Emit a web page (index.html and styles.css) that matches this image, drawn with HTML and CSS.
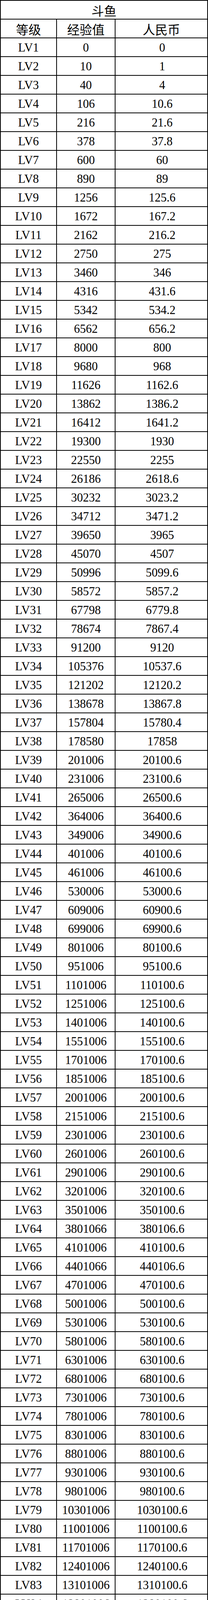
FILE: index.html
```html
<!DOCTYPE html>
<html lang="zh-CN">
<head>
<meta charset="utf-8">
<meta name="viewport" content="width=533, initial-scale=1">
<title>斗鱼 等级</title>
<link rel="stylesheet" href="styles.css">
</head>
<body>
<div class="sheet">
<div class="cell title">斗鱼</div>
<div class="cell head">等级</div><div class="cell head">经验值</div><div class="cell head">人民币</div>
<div class="cell lv">LV1</div><div class="cell xp">0</div><div class="cell rmb">0</div>
<div class="cell lv">LV2</div><div class="cell xp">10</div><div class="cell rmb">1</div>
<div class="cell lv">LV3</div><div class="cell xp">40</div><div class="cell rmb">4</div>
<div class="cell lv">LV4</div><div class="cell xp">106</div><div class="cell rmb">10.6</div>
<div class="cell lv">LV5</div><div class="cell xp">216</div><div class="cell rmb">21.6</div>
<div class="cell lv">LV6</div><div class="cell xp">378</div><div class="cell rmb">37.8</div>
<div class="cell lv">LV7</div><div class="cell xp">600</div><div class="cell rmb">60</div>
<div class="cell lv">LV8</div><div class="cell xp">890</div><div class="cell rmb">89</div>
<div class="cell lv">LV9</div><div class="cell xp">1256</div><div class="cell rmb">125.6</div>
<div class="cell lv">LV10</div><div class="cell xp">1672</div><div class="cell rmb">167.2</div>
<div class="cell lv">LV11</div><div class="cell xp">2162</div><div class="cell rmb">216.2</div>
<div class="cell lv">LV12</div><div class="cell xp">2750</div><div class="cell rmb">275</div>
<div class="cell lv">LV13</div><div class="cell xp">3460</div><div class="cell rmb">346</div>
<div class="cell lv">LV14</div><div class="cell xp">4316</div><div class="cell rmb">431.6</div>
<div class="cell lv">LV15</div><div class="cell xp">5342</div><div class="cell rmb">534.2</div>
<div class="cell lv">LV16</div><div class="cell xp">6562</div><div class="cell rmb">656.2</div>
<div class="cell lv">LV17</div><div class="cell xp">8000</div><div class="cell rmb">800</div>
<div class="cell lv">LV18</div><div class="cell xp">9680</div><div class="cell rmb">968</div>
<div class="cell lv">LV19</div><div class="cell xp">11626</div><div class="cell rmb">1162.6</div>
<div class="cell lv">LV20</div><div class="cell xp">13862</div><div class="cell rmb">1386.2</div>
<div class="cell lv">LV21</div><div class="cell xp">16412</div><div class="cell rmb">1641.2</div>
<div class="cell lv">LV22</div><div class="cell xp">19300</div><div class="cell rmb">1930</div>
<div class="cell lv">LV23</div><div class="cell xp">22550</div><div class="cell rmb">2255</div>
<div class="cell lv">LV24</div><div class="cell xp">26186</div><div class="cell rmb">2618.6</div>
<div class="cell lv">LV25</div><div class="cell xp">30232</div><div class="cell rmb">3023.2</div>
<div class="cell lv">LV26</div><div class="cell xp">34712</div><div class="cell rmb">3471.2</div>
<div class="cell lv">LV27</div><div class="cell xp">39650</div><div class="cell rmb">3965</div>
<div class="cell lv">LV28</div><div class="cell xp">45070</div><div class="cell rmb">4507</div>
<div class="cell lv">LV29</div><div class="cell xp">50996</div><div class="cell rmb">5099.6</div>
<div class="cell lv">LV30</div><div class="cell xp">58572</div><div class="cell rmb">5857.2</div>
<div class="cell lv">LV31</div><div class="cell xp">67798</div><div class="cell rmb">6779.8</div>
<div class="cell lv">LV32</div><div class="cell xp">78674</div><div class="cell rmb">7867.4</div>
<div class="cell lv">LV33</div><div class="cell xp">91200</div><div class="cell rmb">9120</div>
<div class="cell lv">LV34</div><div class="cell xp">105376</div><div class="cell rmb">10537.6</div>
<div class="cell lv">LV35</div><div class="cell xp">121202</div><div class="cell rmb">12120.2</div>
<div class="cell lv">LV36</div><div class="cell xp">138678</div><div class="cell rmb">13867.8</div>
<div class="cell lv">LV37</div><div class="cell xp">157804</div><div class="cell rmb">15780.4</div>
<div class="cell lv">LV38</div><div class="cell xp">178580</div><div class="cell rmb">17858</div>
<div class="cell lv">LV39</div><div class="cell xp">201006</div><div class="cell rmb">20100.6</div>
<div class="cell lv">LV40</div><div class="cell xp">231006</div><div class="cell rmb">23100.6</div>
<div class="cell lv">LV41</div><div class="cell xp">265006</div><div class="cell rmb">26500.6</div>
<div class="cell lv">LV42</div><div class="cell xp">364006</div><div class="cell rmb">36400.6</div>
<div class="cell lv">LV43</div><div class="cell xp">349006</div><div class="cell rmb">34900.6</div>
<div class="cell lv">LV44</div><div class="cell xp">401006</div><div class="cell rmb">40100.6</div>
<div class="cell lv">LV45</div><div class="cell xp">461006</div><div class="cell rmb">46100.6</div>
<div class="cell lv">LV46</div><div class="cell xp">530006</div><div class="cell rmb">53000.6</div>
<div class="cell lv">LV47</div><div class="cell xp">609006</div><div class="cell rmb">60900.6</div>
<div class="cell lv">LV48</div><div class="cell xp">699006</div><div class="cell rmb">69900.6</div>
<div class="cell lv">LV49</div><div class="cell xp">801006</div><div class="cell rmb">80100.6</div>
<div class="cell lv">LV50</div><div class="cell xp">951006</div><div class="cell rmb">95100.6</div>
<div class="cell lv">LV51</div><div class="cell xp">1101006</div><div class="cell rmb">110100.6</div>
<div class="cell lv">LV52</div><div class="cell xp">1251006</div><div class="cell rmb">125100.6</div>
<div class="cell lv">LV53</div><div class="cell xp">1401006</div><div class="cell rmb">140100.6</div>
<div class="cell lv">LV54</div><div class="cell xp">1551006</div><div class="cell rmb">155100.6</div>
<div class="cell lv">LV55</div><div class="cell xp">1701006</div><div class="cell rmb">170100.6</div>
<div class="cell lv">LV56</div><div class="cell xp">1851006</div><div class="cell rmb">185100.6</div>
<div class="cell lv">LV57</div><div class="cell xp">2001006</div><div class="cell rmb">200100.6</div>
<div class="cell lv">LV58</div><div class="cell xp">2151006</div><div class="cell rmb">215100.6</div>
<div class="cell lv">LV59</div><div class="cell xp">2301006</div><div class="cell rmb">230100.6</div>
<div class="cell lv">LV60</div><div class="cell xp">2601006</div><div class="cell rmb">260100.6</div>
<div class="cell lv">LV61</div><div class="cell xp">2901006</div><div class="cell rmb">290100.6</div>
<div class="cell lv">LV62</div><div class="cell xp">3201006</div><div class="cell rmb">320100.6</div>
<div class="cell lv">LV63</div><div class="cell xp">3501006</div><div class="cell rmb">350100.6</div>
<div class="cell lv">LV64</div><div class="cell xp">3801066</div><div class="cell rmb">380106.6</div>
<div class="cell lv">LV65</div><div class="cell xp">4101006</div><div class="cell rmb">410100.6</div>
<div class="cell lv">LV66</div><div class="cell xp">4401066</div><div class="cell rmb">440106.6</div>
<div class="cell lv">LV67</div><div class="cell xp">4701006</div><div class="cell rmb">470100.6</div>
<div class="cell lv">LV68</div><div class="cell xp">5001006</div><div class="cell rmb">500100.6</div>
<div class="cell lv">LV69</div><div class="cell xp">5301006</div><div class="cell rmb">530100.6</div>
<div class="cell lv">LV70</div><div class="cell xp">5801006</div><div class="cell rmb">580100.6</div>
<div class="cell lv">LV71</div><div class="cell xp">6301006</div><div class="cell rmb">630100.6</div>
<div class="cell lv">LV72</div><div class="cell xp">6801006</div><div class="cell rmb">680100.6</div>
<div class="cell lv">LV73</div><div class="cell xp">7301006</div><div class="cell rmb">730100.6</div>
<div class="cell lv">LV74</div><div class="cell xp">7801006</div><div class="cell rmb">780100.6</div>
<div class="cell lv">LV75</div><div class="cell xp">8301006</div><div class="cell rmb">830100.6</div>
<div class="cell lv">LV76</div><div class="cell xp">8801006</div><div class="cell rmb">880100.6</div>
<div class="cell lv">LV77</div><div class="cell xp">9301006</div><div class="cell rmb">930100.6</div>
<div class="cell lv">LV78</div><div class="cell xp">9801006</div><div class="cell rmb">980100.6</div>
<div class="cell lv">LV79</div><div class="cell xp">10301006</div><div class="cell rmb">1030100.6</div>
<div class="cell lv">LV80</div><div class="cell xp">11001006</div><div class="cell rmb">1100100.6</div>
<div class="cell lv">LV81</div><div class="cell xp">11701006</div><div class="cell rmb">1170100.6</div>
<div class="cell lv">LV82</div><div class="cell xp">12401006</div><div class="cell rmb">1240100.6</div>
<div class="cell lv">LV83</div><div class="cell xp">13101006</div><div class="cell rmb">1310100.6</div>
<div class="cell lv">LV84</div><div class="cell xp">13801006</div><div class="cell rmb">1380100.6</div>
<div class="cell lv">LV85</div><div class="cell xp">14501006</div><div class="cell rmb">1450100.6</div>
<div class="cell lv">LV86</div><div class="cell xp">15201006</div><div class="cell rmb">1520100.6</div>
<div class="cell lv">LV87</div><div class="cell xp">15901006</div><div class="cell rmb">1590100.6</div>
<div class="cell lv">LV88</div><div class="cell xp">16601006</div><div class="cell rmb">1660100.6</div>
<div class="cell lv">LV89</div><div class="cell xp">17301006</div><div class="cell rmb">1730100.6</div>
<div class="cell lv">LV90</div><div class="cell xp">18201006</div><div class="cell rmb">1820100.6</div>
<div class="cell lv">LV91</div><div class="cell xp">19101006</div><div class="cell rmb">1910100.6</div>
<div class="cell lv">LV92</div><div class="cell xp">20001006</div><div class="cell rmb">2000100.6</div>
<div class="cell lv">LV93</div><div class="cell xp">20901006</div><div class="cell rmb">2090100.6</div>
<div class="cell lv">LV94</div><div class="cell xp">21801006</div><div class="cell rmb">2180100.6</div>
<div class="cell lv">LV95</div><div class="cell xp">22701006</div><div class="cell rmb">2270100.6</div>
<div class="cell lv">LV96</div><div class="cell xp">23601006</div><div class="cell rmb">2360100.6</div>
<div class="cell lv">LV97</div><div class="cell xp">24501006</div><div class="cell rmb">2450100.6</div>
<div class="cell lv">LV98</div><div class="cell xp">25401006</div><div class="cell rmb">2540100.6</div>
<div class="cell lv">LV99</div><div class="cell xp">26301006</div><div class="cell rmb">2630100.6</div>
<div class="cell lv">LV100</div><div class="cell xp">27501006</div><div class="cell rmb">2750100.6</div>
<div class="cell lv">LV101</div><div class="cell xp">28701006</div><div class="cell rmb">2870100.6</div>
<div class="cell lv">LV102</div><div class="cell xp">29901006</div><div class="cell rmb">2990100.6</div>
<div class="cell lv">LV103</div><div class="cell xp">31101006</div><div class="cell rmb">3110100.6</div>
<div class="cell lv">LV104</div><div class="cell xp">32301006</div><div class="cell rmb">3230100.6</div>
<div class="cell lv">LV105</div><div class="cell xp">33501006</div><div class="cell rmb">3350100.6</div>
<div class="cell lv">LV106</div><div class="cell xp">34701006</div><div class="cell rmb">3470100.6</div>
<div class="cell lv">LV107</div><div class="cell xp">35901006</div><div class="cell rmb">3590100.6</div>
<div class="cell lv">LV108</div><div class="cell xp">37101006</div><div class="cell rmb">3710100.6</div>
<div class="cell lv">LV109</div><div class="cell xp">38301006</div><div class="cell rmb">3830100.6</div>
<div class="cell lv">LV110</div><div class="cell xp">39801006</div><div class="cell rmb">3980100.6</div>
<div class="cell lv">LV111</div><div class="cell xp">41301006</div><div class="cell rmb">4130100.6</div>
<div class="cell lv">LV112</div><div class="cell xp">42801006</div><div class="cell rmb">4280100.6</div>
<div class="cell lv">LV113</div><div class="cell xp">44301006</div><div class="cell rmb">4430100.6</div>
<div class="cell lv">LV114</div><div class="cell xp">45801006</div><div class="cell rmb">4580100.6</div>
<div class="cell lv">LV115</div><div class="cell xp">47301006</div><div class="cell rmb">4730100.6</div>
<div class="cell lv">LV116</div><div class="cell xp">48801006</div><div class="cell rmb">4880100.6</div>
<div class="cell lv">LV117</div><div class="cell xp">50301006</div><div class="cell rmb">5030100.6</div>
<div class="cell lv">LV118</div><div class="cell xp">51801006</div><div class="cell rmb">5180100.6</div>
<div class="cell lv">LV119</div><div class="cell xp">53301006</div><div class="cell rmb">5330100.6</div>
<div class="cell lv">LV120</div><div class="cell xp">54801006</div><div class="cell rmb">5480100.6</div>
<div class="cell lv">LV121</div><div class="cell xp">56601006</div><div class="cell rmb">5660100.6</div>
<div class="wm">
  <div class="wm-logo"><span class="wm-one">1</span><span class="wm-k">K</span><span class="wm-diamond"></span></div>
  <div class="wm-text"><span class="wm-cn">一刻游戏网</span><span class="wm-url">www.1kyx.com</span></div>
</div>
</div>
</body>
</html>
```
FILE: styles.css
```css
html, body {
  margin: 0;
  padding: 0;
  background: #ffffff;
}

body {
  width: 533px;
  height: 5906px;
  overflow: hidden;
}

.sheet {
  position: relative;
  width: 533px;
  height: 5906px;
  box-sizing: border-box;
  display: grid;
  grid-template-columns: 142px 148px 235px;
  grid-template-rows: repeat(123, 46px);
  grid-auto-rows: 46px;
  gap: 2px;
  padding: 2px;
  background: #000000;
  overflow: hidden;
}

.cell {
  box-sizing: border-box;
  height: 46px;
  overflow: hidden;
  background: #ffffff;
  color: #000000;
  text-align: center;
  white-space: nowrap;
}

.title,
.head {
  font-family: "Noto Sans CJK SC", "Noto Sans CJK JP", sans-serif;
  font-size: 32px;
  line-height: 44px;
  padding-top: 2px;
}

.title {
  grid-column: 1 / 4;
}

.lv,
.xp,
.rmb {
  font-family: "Liberation Serif", "Times New Roman", serif;
  font-size: 30.5px;
  line-height: 44px;
  padding-top: 2px;
}

.rmb {
  padding-left: 4px;
}

.wm {
  position: absolute;
  left: 322px;
  top: 5834px;
  display: flex;
  align-items: flex-start;
  gap: 8px;
  pointer-events: none;
  color: rgba(120, 120, 120, 0.3);
}

.wm-logo {
  position: relative;
  display: flex;
  align-items: flex-end;
  height: 48px;
  font-family: "Liberation Serif", serif;
  font-weight: bold;
  font-size: 52px;
  line-height: 48px;
}

.wm-one {
  letter-spacing: -4px;
}

.wm-diamond {
  position: absolute;
  left: 44px;
  top: 22px;
  width: 14px;
  height: 14px;
  background: rgba(120, 120, 120, 0.3);
  transform: rotate(45deg);
}

.wm-text {
  display: flex;
  flex-direction: column;
  padding-top: 8px;
}

.wm-cn {
  font-family: "Noto Sans CJK SC", sans-serif;
  font-size: 24px;
  line-height: 26px;
}

.wm-url {
  font-family: "DejaVu Sans", sans-serif;
  font-size: 12px;
  line-height: 16px;
  letter-spacing: 6px;
  margin-top: 6px;
  margin-left: -14px;
}
```
